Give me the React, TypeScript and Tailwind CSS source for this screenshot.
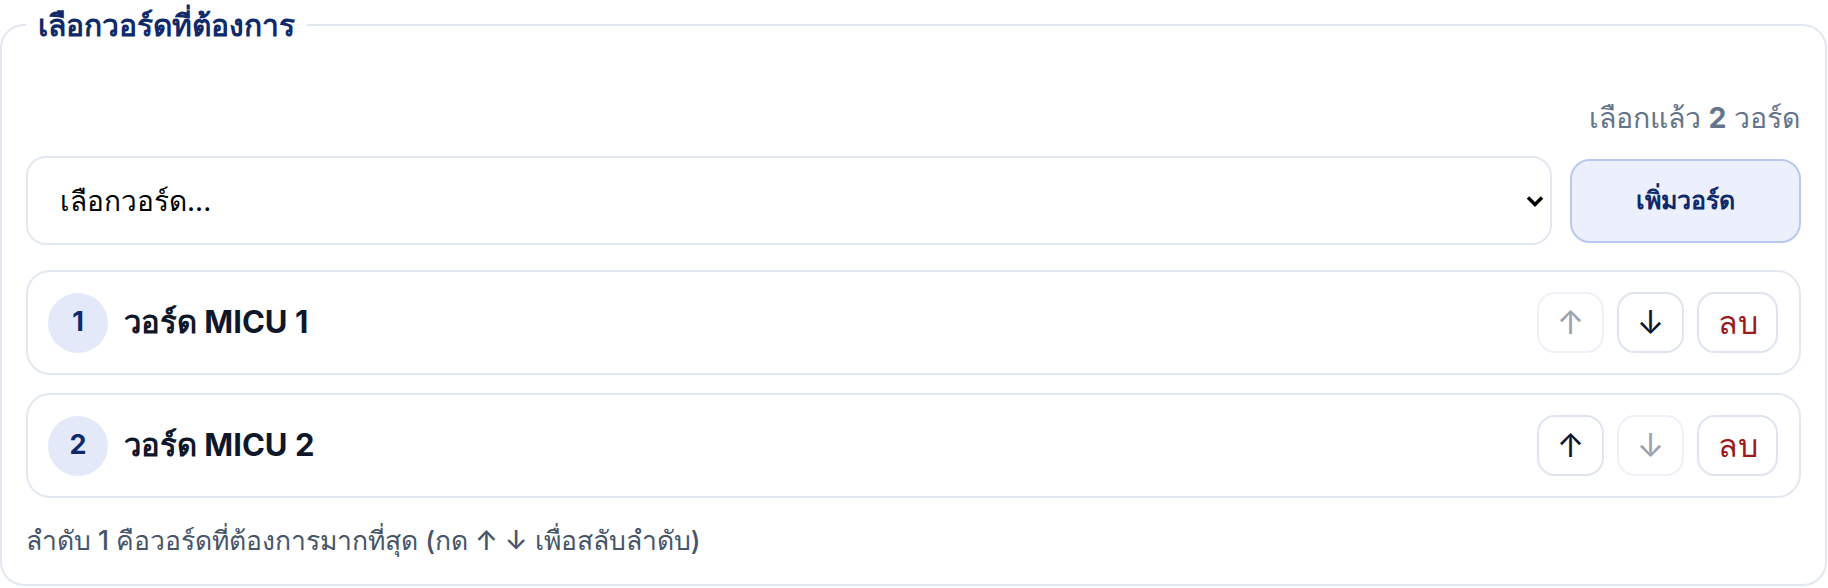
import { useState } from "react";

interface Ward {
  id: string;
  name: string;
}

const WARDS: Ward[] = [
  { id: "micu1", name: "วอร์ด MICU 1" },
  { id: "micu2", name: "วอร์ด MICU 2" },
];

function MoveButton({
  label,
  disabled,
  onClick,
}: {
  label: string;
  disabled: boolean;
  onClick: () => void;
}) {
  return (
    <button
      onClick={onClick}
      disabled={disabled}
      className={
        disabled
          ? "w-[67px] h-[61px] flex items-center justify-center rounded-[18px] border-2 border-[#eef1f7] bg-white text-[33px] leading-none text-[#9ca3af]"
          : "w-[67px] h-[61px] flex items-center justify-center rounded-[18px] border-2 border-[#dfe5ef] bg-white text-[33px] leading-none text-[#0f172a]"
      }
    >
      {label}
    </button>
  );
}

export default function App() {
  const [wards, setWards] = useState<Ward[]>(WARDS);

  const move = (index: number, dir: -1 | 1) => {
    const next = [...wards];
    const target = index + dir;
    [next[index], next[target]] = [next[target], next[index]];
    setWards(next);
  };

  return (
    <div
      className="w-[1828px] h-[588px] bg-white"
      style={{ fontFamily: '"Inter", "Noto Sans", sans-serif' }}
    >
      <fieldset className="w-[1827px] border-2 border-[#e2e8f0] rounded-[24px] px-6 pt-[52px] pb-[28px]">
        <legend className="px-3 text-[30px] leading-[50px] font-bold text-[#0f2a6b]">
          เลือกวอร์ดที่ต้องการ
        </legend>

        <div className="flex justify-end text-[28.5px] leading-[32px] font-medium text-[#64748b]">
          <span>
            เลือกแล้ว <span className="font-bold">{wards.length}</span> วอร์ด
          </span>
        </div>

        <div className="mt-[22px] flex items-center gap-[18px]">
          <div className="relative flex-1">
            <select className="w-full h-[89px] appearance-none rounded-[20px] border-2 border-[#e2e8f0] bg-white pl-8 text-[28px] text-black outline-none">
              <option>เลือกวอร์ด...</option>
            </select>
            {/* custom chevron so it sits where the native one did */}
            <svg
              className="absolute right-[8px] top-1/2 -translate-y-1/2 pointer-events-none"
              width="18"
              height="12"
              viewBox="0 0 18 12"
            >
              <path d="M2 2.5 9 9.5 16 2.5" fill="none" stroke="#000" strokeWidth="3.4" />
            </svg>
          </div>
          <button className="w-[231px] h-[84px] rounded-[20px] border-2 border-[#b9c8f1] bg-[#ebf0fc] text-[25px] font-bold text-[#0f2a6b]">
            เพิ่มวอร์ด
          </button>
        </div>

        <div className="mt-[25px] flex flex-col gap-[18px]">
          {wards.map((ward, i) => (
            <div
              key={ward.id}
              className="h-[105px] flex items-center rounded-[24px] border-2 border-[#e2e8f0] pl-5 pr-[21px]"
            >
              <div className="w-[60px] h-[60px] rounded-full bg-[#e3e9f8] flex items-center justify-center text-[27px] font-bold text-[#0f2a6b]">
                {i + 1}
              </div>
              <span className="ml-4 flex-1 text-[31px] font-bold text-[#0f172a]">
                {ward.name}
              </span>
              <div className="flex items-center gap-[13px]">
                <MoveButton label="↑" disabled={i === 0} onClick={() => move(i, -1)} />
                <MoveButton
                  label="↓"
                  disabled={i === wards.length - 1}
                  onClick={() => move(i, 1)}
                />
                <button className="w-[81px] h-[61px] rounded-[18px] border-2 border-[#dfe5ef] bg-white text-[32px] font-medium text-[#991b1b]">
                  ลบ
                </button>
              </div>
            </div>
          ))}
        </div>

        <p className="mt-[26px] text-[26.5px] leading-[32px] font-medium text-[#475569]">
          ลำดับ 1 คือวอร์ดที่ต้องการมากที่สุด (กด ↑ ↓ เพื่อสลับลำดับ)
        </p>
      </fieldset>
    </div>
  );
}
